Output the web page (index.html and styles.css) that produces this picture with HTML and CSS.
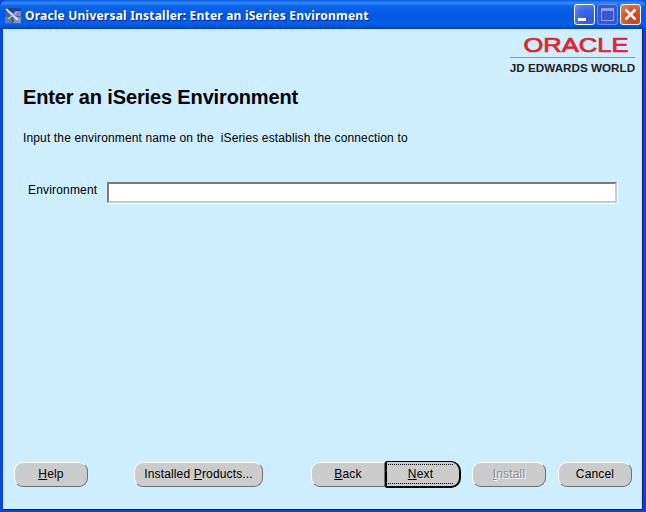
FILE: index.html
```html
<!DOCTYPE html>
<html lang="en">
<head>
    <meta charset="UTF-8">
    <title>Oracle Universal Installer: Enter an iSeries Environment</title>
    <link rel="stylesheet" href="styles.css">
</head>
<body>

<div class="window">
    <div class="titlebar">
        <svg class="app-icon" width="16" height="16" viewBox="0 0 16 16">
            <rect width="16" height="16" fill="#41639f"/>
            <rect x="0" y="0" width="16" height="4" fill="#22458f"/>
            <rect x="10" y="3" width="6" height="5" fill="#6f8fc0"/>
            <rect x="9" y="9" width="7" height="6" fill="#8593b4"/>
            <rect x="0" y="9" width="6" height="6" fill="#5f7aa8"/>
            <path d="M1 1 L13 12" stroke="#d4e2f4" stroke-width="2.2"/>
            <path d="M3 11 L12 4" stroke="#a9bfe0" stroke-width="1.4"/>
            <rect x="0" y="15" width="16" height="1" fill="#e8262a"/>
        </svg>
        <span class="title-text">Oracle Universal Installer: Enter an iSeries Environment</span>
        <div class="win-buttons">
            <div class="win-btn">
                <svg width="21" height="21" viewBox="0 0 21 21"><rect x="4" y="14" width="8" height="3" fill="#fff"/></svg>
            </div>
            <div class="win-btn win-btn-disabled">
                <svg width="21" height="21" viewBox="0 0 21 21"><path d="M4.5 4.5 H16.5 V16.5 H4.5 Z" fill="none" stroke="#8ea2e0"/><rect x="4" y="4" width="13" height="3" fill="#8ea2e0"/></svg>
            </div>
            <div class="win-btn win-btn-close">
                <svg width="21" height="21" viewBox="0 0 21 21"><path d="M5.5 5.5 L15.5 15.5 M15.5 5.5 L5.5 15.5" stroke="#fff" stroke-width="2.6"/></svg>
            </div>
        </div>
    </div>

    <div class="content">
        <div class="logo">
            <svg class="oracle-mark" width="120" height="25" viewBox="0 0 120 25">
                <text x="10.5" y="20" textLength="105" lengthAdjust="spacingAndGlyphs">ORACLE</text>
            </svg>
            <div class="logo-rule"></div>
            <div class="logo-sub">JD EDWARDS WORLD</div>
        </div>

        <h1>Enter an iSeries Environment</h1>
        <p class="intro">Input the environment name on the  iSeries establish the connection to</p>

        <div class="field">
            <label class="field-label">Environment</label>
            <input class="field-input" type="text">
        </div>

        <div class="actions">
            <button class="help"><u>H</u>elp</button>
            <button class="products">Installed <u>P</u>roducts...</button>
            <div class="nav-pair">
                <button class="back"><u>B</u>ack</button>
                <button class="next"><span class="focus-ring"><u>N</u>ext</span></button>
            </div>
            <button class="install" disabled><u>I</u>nstall</button>
            <button class="cancel">Cancel</button>
        </div>
    </div>
</div>

</body>
</html>
```

FILE: styles.css
```css
* { box-sizing: border-box; }
html, body {
    margin: 0;
    height: 100%;
}
body {
    overflow: hidden;
    font-family: 'Liberation Sans', Arial, sans-serif;
}
.window {
    width: 646px;
    height: 512px;
    display: flex;
    flex-direction: column;
    background-color: #0a45d8;
}
.titlebar {
    height: 29px;
    flex: none;
    display: flex;
    align-items: center;
    padding: 2px 5px 0 5px;
    border-radius: 7px 7px 0 0;
    background: linear-gradient(to bottom, #0a5ae6 0, #2f8cfa 3px, #0f62ea 6px, #0258e2 16px, #0360ee 24px, #0247c8 28px, #0137a8 29px);
}
.app-icon { flex: none; }
.title-text {
    margin-left: 4px;
    color: #fff;
    font-family: 'Noto Sans', Verdana, sans-serif;
    font-size: 12px;
    font-weight: bold;
    letter-spacing: 0.21px;
    white-space: nowrap;
    text-shadow: 1px 1px 0 #0a2a90;
}
.win-buttons {
    margin-left: auto;
    margin-top: -2px;
    display: flex;
    gap: 2px;
}
.win-btn {
    width: 21px;
    height: 21px;
    border: 1px solid #fff;
    border-radius: 3px;
    background: radial-gradient(circle at 70% 75%, #2f55dc 0, #3a68e6 50%, #6e93f2 100%);
}
.win-btn svg {
    display: block;
    margin: -1px;
}
.win-btn-disabled {
    border-color: #6f8ce8;
    background: #3558d8;
}
.win-btn-close {
    background: radial-gradient(circle at 65% 70%, #c83a14 0, #d9582e 55%, #e88a6c 100%);
}
.content {
    flex: 1;
    display: flex;
    flex-direction: column;
    margin: 0 3px 2px 3px;
    padding-top: 6px;
    background-color: #cceeff;
    border-right: 1px solid #00138c;
    border-bottom: 1px solid #00138c;
    color: #000;
}
.logo {
    align-self: flex-end;
    width: 127px;
    margin-right: 6px;
    display: flex;
    flex-direction: column;
    align-items: center;
}
.oracle-mark {
    display: block;
    margin: -3px 0 -2px;
}
.oracle-mark text {
    font-family: 'Liberation Sans', Arial, sans-serif;
    font-size: 20px;
    fill: #e4222a;
    stroke: #e4222a;
    stroke-width: 0.7;
}
.logo-rule {
    width: 125px;
    height: 1px;
    margin-top: 2px;
    background-color: #9a8f8f;
}
.logo-sub {
    margin-top: 3px;
    font-size: 11.7px;
    font-weight: bold;
    color: #222;
    white-space: nowrap;
}
h1 {
    margin: 11px 0 0 20px;
    font-size: 20px;
    line-height: 24px;
    font-weight: bold;
    letter-spacing: -0.14px;
}
.intro {
    margin: 22px 0 0 20px;
    font-size: 12px;
    line-height: 14px;
    letter-spacing: 0.14px;
    white-space: pre;
}
.field {
    display: flex;
    align-items: flex-start;
    margin: 37px 0 0 25px;
}
.field-label {
    width: 79px;
    font-size: 12px;
    line-height: 16px;
    letter-spacing: 0.18px;
}
.field-input {
    width: 510px;
    height: 21px;
    padding: 0;
    background-color: #fff;
    border-style: solid;
    border-width: 2px 2px 2px 2px;
    border-color: #7b7b7b #c8c8c8 #c8c8c8 #7b7b7b;
    border-radius: 1px;
    box-shadow: 1px 1px 0 #fff;
}
.actions {
    margin-top: auto;
    margin-bottom: 21px;
    display: flex;
    align-items: center;
    padding-left: 11px;
}
button {
    height: 25px;
    padding: 0 0 2px 0;
    font-family: 'Liberation Sans', Arial, sans-serif;
    font-size: 12px;
    letter-spacing: 0.15px;
    color: #000;
    background-color: #cccccc;
    border: 1px solid #6f6f6f;
    border-top-color: #fff;
    border-left-color: #fff;
    border-radius: 9px;
}
.help { width: 74px; }
.products {
    width: 129px;
    margin-left: 46px;
}
.nav-pair {
    display: flex;
    align-items: center;
    margin-left: 48px;
}
.back {
    width: 74px;
    border-radius: 9px 0 0 9px;
}
.next {
    width: 76px;
    height: 27px;
    padding: 1px;
    border: 2px solid #000;
    border-top-width: 1px;
    border-radius: 2px 10px 10px 2px;
}
.focus-ring {
    display: block;
    width: 65px;
    height: 20px;
    line-height: 18px;
    border-top: 1px dotted #000;
    border-bottom: 1px dotted #000;
}
.install {
    width: 74px;
    margin-left: 11px;
    color: #8a8a8a;
    text-shadow: 1px 1px 0 #fff;
}
.cancel {
    width: 74px;
    margin-left: 12px;
}
```
